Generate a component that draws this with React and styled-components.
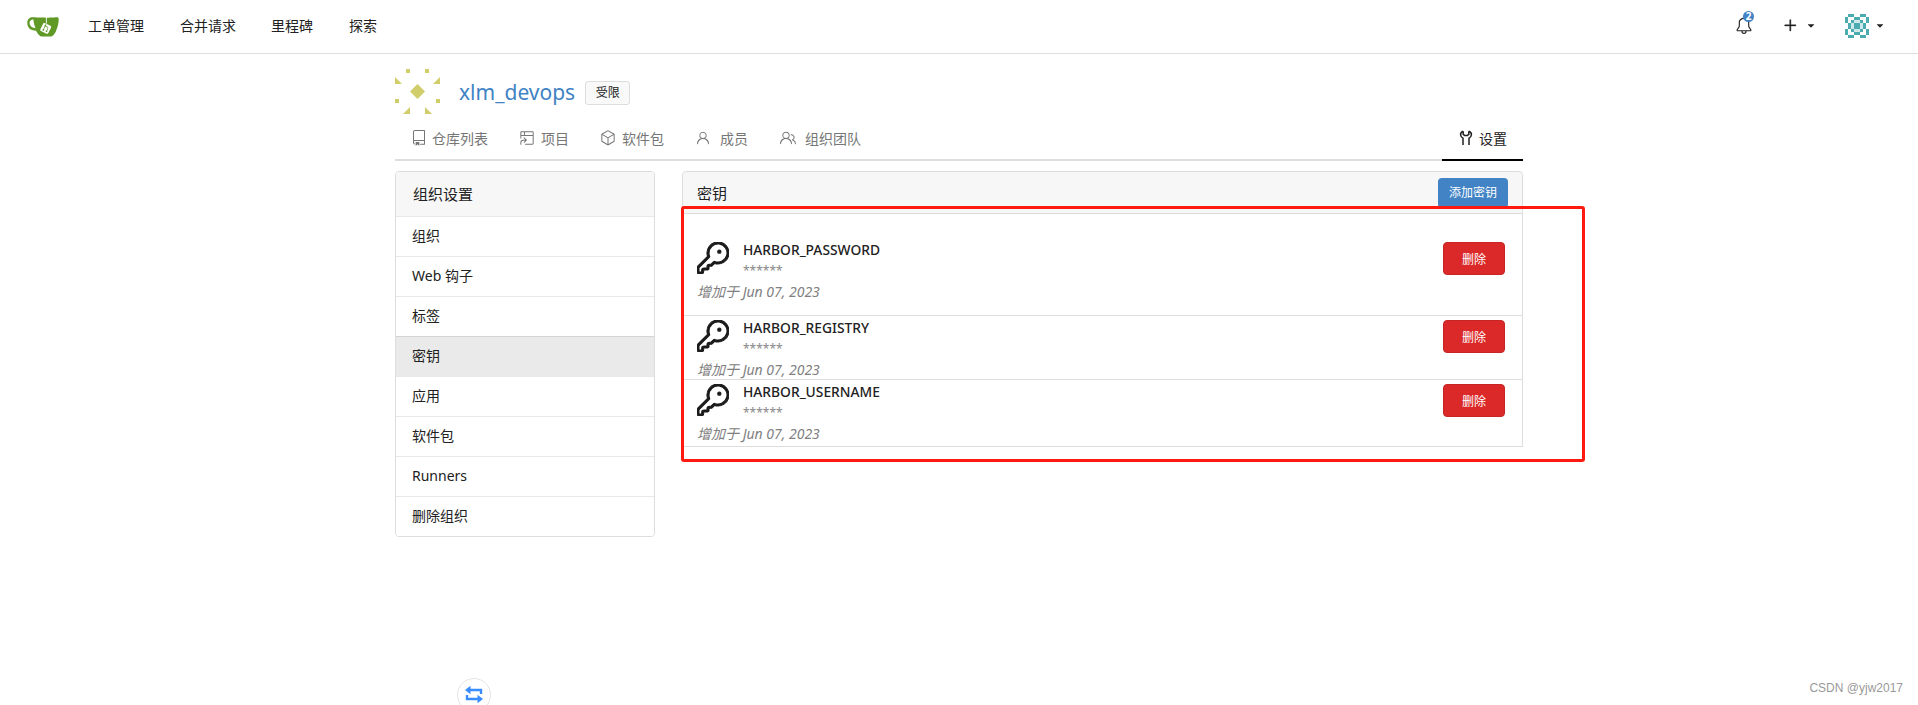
import React from 'react'
import styled, { createGlobalStyle } from 'styled-components'
import {
    GoBell,
    GoKey,
    GoPackage,
    GoPeople,
    GoPerson,
    GoPlus,
    GoProjectSymlink,
    GoRepo,
    GoTriangleDown,
} from 'react-icons/go'

const GlobalStyle = createGlobalStyle`
html, body {
    margin: 0;
    height: 705px;
    overflow: hidden;
    background: #fff;
}
body {
    position: relative;
    font-family: "Noto Sans", "Noto Sans CJK SC", sans-serif;
    font-size: 14px;
    color: #212121;
}
`

const TopNav = styled.nav`
box-sizing: border-box;
height: 54px;
display: flex;
align-items: center;
border-bottom: 1px solid #dedede;
padding: 0 0 2px 27px;
`
const NavLink = styled.a`
margin-left: ${(p) => p.$gap}px;
line-height: 20px;
color: #212121;
white-space: nowrap;
`
const NavRight = styled.div`
margin-left: auto;
display: flex;
align-items: center;
padding-right: 32px;
`
const BellWrap = styled.span`
position: relative;
display: flex;
margin-right: 28px;
`
const Badge = styled.span`
position: absolute;
top: -6px;
left: 8px;
width: 11px;
height: 11px;
border-radius: 50%;
background: #4183c4;
color: #fff;
font-size: 10px;
font-weight: 700;
line-height: 11px;
text-align: center;
`
const PlusIcon = styled(GoPlus)`
width: 19px;
height: 19px;
stroke: currentColor;
stroke-width: 0.5;
`
const Caret = styled(GoTriangleDown)`
width: 12px;
height: 12px;
margin-left: ${(p) => p.$gap}px;
`
const AvatarSlot = styled.span`
display: flex;
margin-left: 28px;
`
const Main = styled.main`
width: 1128px;
margin: 15px auto 0;
`
const OrgHead = styled.header`
display: flex;
align-items: center;
height: 45px;
`
const OrgName = styled.span`
margin-left: 19px;
font-size: 21px;
line-height: 28px;
color: #4183c4;
`
const Scope = styled.span`
margin-left: 10px;
margin-top: 3px;
box-sizing: border-box;
width: 45px;
height: 24px;
border: 1px solid #ddd;
border-radius: 3px;
background: #f9f9f9;
font-size: 12px;
line-height: 22px;
text-align: center;
`
const Tabs = styled.div`
box-sizing: border-box;
height: 47px;
display: flex;
align-items: flex-start;
border-bottom: 2px solid #dedede;
`
const Tab = styled.a`
box-sizing: border-box;
height: 45px;
display: flex;
align-items: center;
gap: ${(p) => p.$gap}px;
margin-left: ${(p) => p.$left}px;
color: ${(p) => (p.$active ? '#212121' : '#767676')};
white-space: nowrap;
padding-top: 3px;
`
const ActiveTab = styled(Tab)`
margin-left: auto;
width: 81px;
height: 47px;
justify-content: center;
border-bottom: 2px solid #000;
`
const Columns = styled.div`
display: flex;
align-items: flex-start;
margin-top: 10px;
`
const Sidebar = styled.aside`
box-sizing: border-box;
width: 260px;
border: 1px solid #ddd;
border-radius: 4px;
overflow: hidden;
`
const SideHead = styled.div`
height: 44px;
padding-left: 17px;
font-size: 15px;
line-height: 44px;
background: #f7f7f7;
`
const SideItem = styled.a`
display: block;
box-sizing: border-box;
height: 40px;
padding-left: 16px;
border-top: 1px solid ${(p) => (p.$active ? '#d4d4d4' : '#e8e8e8')};
line-height: 37px;
background: ${(p) => (p.$active ? '#eaeaea' : '#fff')};
`
const Panel = styled.section`
width: 841px;
margin-left: 27px;
`
const PanelHead = styled.div`
box-sizing: border-box;
height: 43px;
display: flex;
align-items: flex-start;
justify-content: space-between;
padding: 6px 14px 0 14px;
border: 1px solid #ddd;
border-radius: 4px 4px 0 0;
background: #f7f7f7;
font-size: 15px;
line-height: 30px;
`
const AddButton = styled.button`
width: 70px;
height: 30px;
padding: 0;
border: 0;
border-radius: 4px;
background: #4183c4;
color: #fff;
font: inherit;
font-size: 12px;
`
const SecretList = styled.div`
border: 1px solid #ddd;
border-top: 0;
`
const SecretRow = styled.div`
box-sizing: border-box;
height: ${(p) => p.$height}px;
padding: ${(p) => p.$top}px 17px 0 14px;
border-bottom: 1px solid #dedede;
&:last-child {
    border-bottom: 0;
}
`
const SecretTop = styled.div`
display: flex;
align-items: flex-start;
height: 38px;
`
const KeyIcon = styled(GoKey)`
width: 32px;
height: 32px;
color: #1b1b1b;
stroke: currentColor;
stroke-width: 0.8;
`
const SecretInfo = styled.div`
margin-left: 14px;
flex: 1;
`
const SecretName = styled.div`
margin-top: -1px;
font-weight: 500;
font-size: 13.8px;
line-height: 17px;
`
const SecretValue = styled.div`
margin-top: 5px;
font-size: 12px;
line-height: 16px;
color: #888;
`
const DeleteButton = styled.button`
width: 62px;
height: 33px;
padding: 0;
border: 1px solid #c72525;
border-radius: 4px;
background: #db2828;
color: #fff;
font: inherit;
font-size: 12px;
`
const AddedAt = styled.div`
margin-top: 2px;
font-style: italic;
font-size: 14px;
line-height: 20px;
color: #808080;
`
const RedMark = styled.div`
position: absolute;
left: 681px;
top: 206px;
width: 904px;
height: 256px;
box-sizing: border-box;
border: 3px solid #ff1a10;
border-radius: 3px;
pointer-events: none;
`
const FloatButton = styled.div`
position: absolute;
left: 457px;
top: 678px;
box-sizing: border-box;
width: 34px;
height: 34px;
display: flex;
align-items: center;
justify-content: center;
border: 1px solid #e4e4e4;
border-radius: 50%;
background: #fff;
`
const Watermark = styled.div`
position: absolute;
right: 15px;
top: 680px;
font-family: "Liberation Sans", sans-serif;
font-size: 12px;
line-height: 17px;
color: #999;
`

const GiteaLogo = () => (
    <svg width="32" height="32" viewBox="0 0 640 640">
        <path fill="#fff" d="m395.9 484.2-126.9-61c-12.5-6-17.9-21.2-11.8-33.8l61-126.9c6-12.5 21.2-17.9 33.8-11.8 17.2 8.3 27.1 13 27.1 13l-.1-109.2 16.7-.1.1 117.1s57.4 24.2 83.1 40.1c3.7 2.3 10.2 6.8 12.9 14.4 2.1 6.1 2 13.1-1 19.3l-61 126.9c-6.2 12.7-21.4 18.1-33.9 12" />
        <path fill="#609926" d="M622.7 149.8c-4.1-4.1-9.6-4-9.6-4s-117.2 6.6-177.9 8c-13.3.3-26.5.6-39.6.7v117.2c-5.5-2.6-11.1-5.3-16.6-7.9 0-36.4-.1-109.2-.1-109.2-29 .4-89.2-2.2-89.2-2.2s-141.4-7.1-156.8-8.5c-9.8-.6-22.5-2.1-39 1.5-8.7 1.8-33.5 7.4-53.8 26.9C-4.9 212.4 6.6 276.2 8 285.8c1.7 11.7 6.9 44.2 31.7 72.5 45.8 56.1 144.4 54.8 144.4 54.8s12.1 28.9 30.6 55.5c25 33.1 50.7 58.9 75.7 62 63 0 188.9-.1 188.9-.1s12 .1 28.3-10.3c14-8.5 26.5-23.4 26.5-23.4S547 483 565 451.5c5.5-9.7 10.1-19.1 14.1-28 0 0 55.2-117.1 55.2-231.1-1.1-34.5-9.6-40.6-11.6-42.6M125.6 353.9c-25.9-8.5-36.9-18.7-36.9-18.7S69.6 321.8 60 295.4c-16.5-44.2-1.4-71.2-1.4-71.2s8.4-22.5 38.5-30c13.8-3.7 31-3.1 31-3.1s7.1 59.4 15.7 94.2c7.2 29.2 24.8 77.7 24.8 77.7s-26.1-3.1-43-9.1m300.3 107.6s-6.1 14.5-19.6 15.4c-5.8.4-10.3-1.2-10.3-1.2s-.3-.1-5.3-2.1l-112.9-55s-10.9-5.7-12.8-15.6c-2.2-8.1 2.7-18.1 2.7-18.1L322 273s4.8-9.7 12.2-13c.6-.3 2.3-1 4.5-1.5 8.1-2.1 18 2.8 18 2.8L467.4 315s12.6 5.7 15.3 16.2c1.9 7.4-.5 14-1.8 17.2-6.3 15.4-55 113.1-55 113.1" />
        <path fill="#609926" d="M326.8 380.1c-8.2.1-15.4 5.8-17.3 13.8s2 16.3 9.1 20c7.7 4 17.5 1.8 22.7-5.4 5.1-7.1 4.3-16.9-1.8-23.1l24-49.1c1.5.1 3.7.2 6.2-.5 4.1-.9 7.1-3.6 7.1-3.6 4.2 1.8 8.6 3.8 13.2 6.1 4.8 2.4 9.3 4.9 13.4 7.3.9.5 1.8 1.1 2.8 1.9 1.6 1.3 3.4 3.1 4.7 5.5 1.9 5.5-1.9 14.9-1.9 14.9-2.3 7.6-18.4 40.6-18.4 40.6-8.1-.2-15.3 5-17.7 12.5-2.6 8.1 1.1 17.3 8.9 21.3s17.4 1.7 22.5-5.3c5-6.8 4.6-16.3-1.1-22.6 1.9-3.7 3.7-7.4 5.6-11.3 5-10.4 13.5-30.4 13.5-30.4.9-1.7 5.7-10.3 2.7-21.3-2.5-11.4-12.6-16.7-12.6-16.7-12.2-7.9-29.2-15.2-29.2-15.2s0-4.1-1.1-7.1c-1.1-3.1-2.8-5.1-3.9-6.3 4.7-9.7 9.4-19.3 14.1-29-4.1-2-8.1-4-12.2-6.1-4.8 9.8-9.7 19.7-14.5 29.5-6.7-.1-12.9 3.5-16.1 9.4-3.4 6.3-2.7 14.1 1.9 19.8z" />
    </svg>
)

const OrgAvatar = () => (
    <svg width="45" height="45" viewBox="0 0 45 45" fill="#d1cd6b">
        <rect x="11" y="0" width="4" height="4" />
        <rect x="30" y="0" width="4" height="4" />
        <rect x="0" y="30" width="4" height="4" />
        <rect x="41" y="30" width="4" height="4" />
        <path d="M0 8 L7 15 L0 15 Z" />
        <path d="M45 8 L38 15 L45 15 Z" />
        <path d="M15 38 L15 45 L8 45 Z" />
        <path d="M30 38 L30 45 L37 45 Z" />
        <path d="M22.5 15 L30 22.5 L22.5 30 L15 22.5 Z" />
    </svg>
)

// identicon cells: # teal, . white, o pale
const userCells = [
    '.##..##.',
    '#..##..#',
    '#.#oo#.#',
    '.#o##o#.',
    '.#o##o#.',
    '#.#oo#.#',
    '#..##..#',
    '.##..##.',
]
const cellColors = { '#': '#4aacb0', '.': '#ffffff', o: '#cfe9ea' }

const UserAvatar = () => (
    <svg width="24" height="24" viewBox="0 0 24 24">
        {userCells.map((row, y) =>
            row.split('').map((cell, x) => (
                <rect key={`${x}-${y}`} x={x * 3} y={y * 3} width="3" height="3" fill={cellColors[cell]} />
            ))
        )}
    </svg>
)

// two jaws over a single handle, as the settings tab draws it
const WrenchIcon = () => (
    <svg width="16" height="16" viewBox="0 0 16 16" fill="none" stroke="#212121" strokeWidth="1.5">
        <path d="M5.2 1.2C3.4 1.8 2.4 3.2 2.6 5c.2 1.6 1.3 2.6 2.4 3.2V15" />
        <path d="M5.2 1.2V4.4l1.4 1H9.4l1.4-1V1.2" />
        <path d="M10.8 1.2c1.8.6 2.8 2 2.6 3.8-.2 1.6-1.3 2.6-2.4 3.2V15" />
    </svg>
)

const SwapIcon = () => (
    <svg width="20" height="20" viewBox="0 0 20 20" fill="none" stroke="#3b8cff" strokeWidth="2.4">
        <path d="M5 5h12v4" />
        <path d="M15 14H3v-4" />
        <path fill="#3b8cff" stroke="none" d="M6.5 0.8v8.4L1 5zM13.5 9.8v8.4L19 14z" />
    </svg>
)

const sideItems = ['组织', 'Web 钩子', '标签', '密钥', '应用', '软件包', 'Runners', '删除组织']

const secrets = [
    { name: 'HARBOR_PASSWORD', height: 102, top: 28 },
    { name: 'HARBOR_REGISTRY', height: 64, top: 4 },
    { name: 'HARBOR_USERNAME', height: 66, top: 4 },
]

const App = () => {
    return (
        <>
            <GlobalStyle />
            <TopNav>
                <GiteaLogo />
                <NavLink $gap={29}>工单管理</NavLink>
                <NavLink $gap={36}>合并请求</NavLink>
                <NavLink $gap={35}>里程碑</NavLink>
                <NavLink $gap={36}>探索</NavLink>
                <NavRight>
                    <BellWrap>
                        <GoBell size={18} />
                        <Badge>2</Badge>
                    </BellWrap>
                    <PlusIcon />
                    <Caret $gap={5} />
                    <AvatarSlot><UserAvatar /></AvatarSlot>
                    <Caret $gap={5} />
                </NavRight>
            </TopNav>
            <Main>
                <OrgHead>
                    <OrgAvatar />
                    <OrgName>xlm_devops</OrgName>
                    <Scope>受限</Scope>
                </OrgHead>
                <Tabs>
                    <Tab $left={16} $gap={5}><GoRepo size={16} />仓库列表</Tab>
                    <Tab $left={31} $gap={6}><GoProjectSymlink size={16} />项目</Tab>
                    <Tab $left={31} $gap={6}><GoPackage size={16} />软件包</Tab>
                    <Tab $left={31} $gap={9}><GoPerson size={16} />成员</Tab>
                    <Tab $left={32} $gap={9}><GoPeople size={16} />组织团队</Tab>
                    <ActiveTab $active $gap={5}><WrenchIcon />设置</ActiveTab>
                </Tabs>
                <Columns>
                    <Sidebar>
                        <SideHead>组织设置</SideHead>
                        {sideItems.map((item) => (
                            <SideItem key={item} $active={item === '密钥'}>{item}</SideItem>
                        ))}
                    </Sidebar>
                    <Panel>
                        <PanelHead>
                            <span>密钥</span>
                            <AddButton>添加密钥</AddButton>
                        </PanelHead>
                        <SecretList>
                            {secrets.map((secret) => (
                                <SecretRow key={secret.name} $height={secret.height} $top={secret.top}>
                                    <SecretTop>
                                        <KeyIcon />
                                        <SecretInfo>
                                            <SecretName>{secret.name}</SecretName>
                                            <SecretValue>******</SecretValue>
                                        </SecretInfo>
                                        <DeleteButton>删除</DeleteButton>
                                    </SecretTop>
                                    <AddedAt>增加于 Jun 07, 2023</AddedAt>
                                </SecretRow>
                            ))}
                        </SecretList>
                    </Panel>
                </Columns>
            </Main>
            <RedMark />
            <FloatButton><SwapIcon /></FloatButton>
            <Watermark>CSDN @yjw2017</Watermark>
        </>
    )
}

export default App
